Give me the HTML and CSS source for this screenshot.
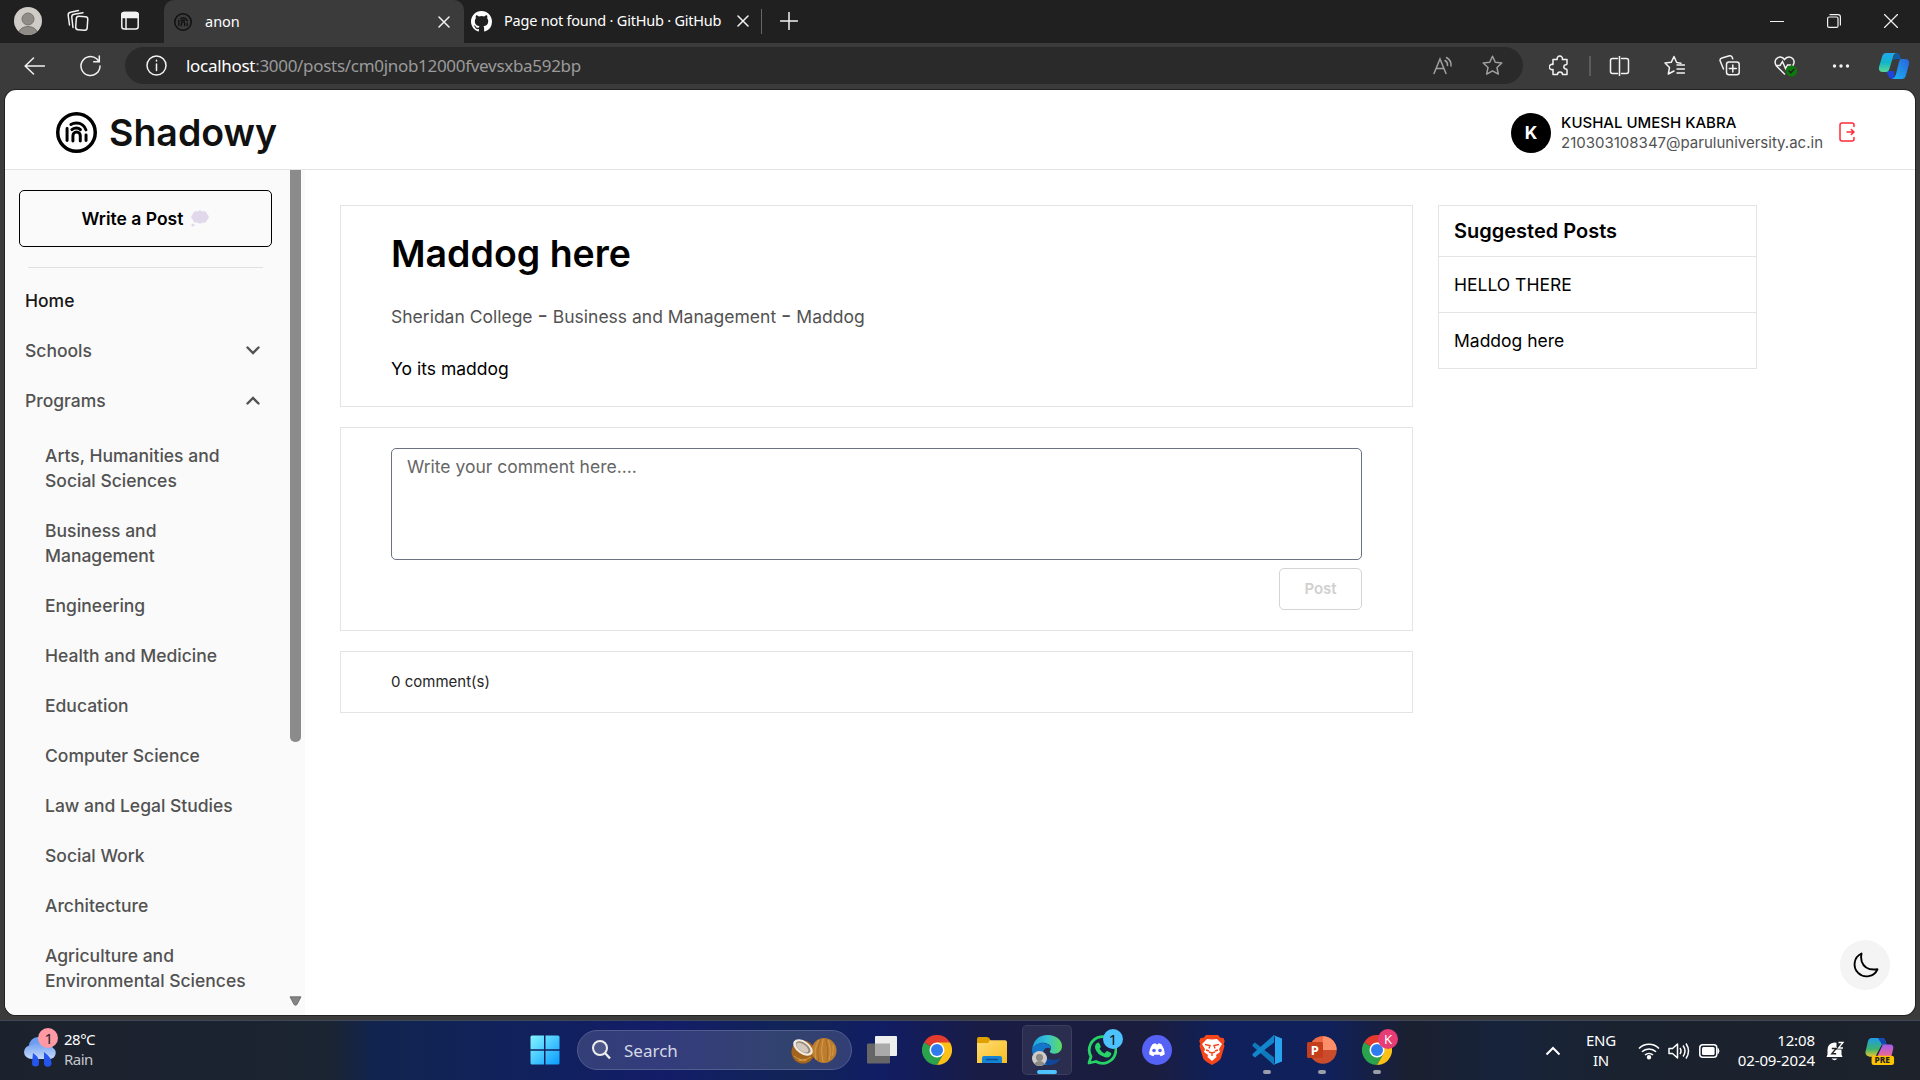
FILE: index.html
```html
<!DOCTYPE html>
<html lang="en">
<head>
<meta charset="utf-8">
<title>anon</title>
<link rel="stylesheet" href="styles.css">
</head>
<body>
<svg class="defs" width="0" height="0">
  <defs>
    <symbol id="finger" viewBox="0 0 40 40">
      <g fill="none" stroke="currentColor" stroke-linecap="round">
        <circle cx="20" cy="20" r="18.3" stroke-width="3.4"/>
        <g stroke-width="2.900">
          <path d="M14.500 12.200C16 11.300 18 10.800 20 10.800c4.300 0 8 2.800 9.200 6.700"/>
          <path d="M10.800 16v11.800M15.500 17.200q2-1.600 4.500-1.600 2.200 0 3.800 1.600"/>
          <path d="M16.500 28.200v-5a3.600 3.600 0 0 1 7.200 0v5M29.300 22.500v5.300"/>
        </g>
      </g>
    </symbol>
    <symbol id="chrome" viewBox="0 0 30 30">
      <path d="M15 15 2 7.500A15 15 0 0 1 28 7.500z" fill="#e33b2e"/>
      <path d="M15 15 2 7.500A15 15 0 0 0 15 30l6.500-11.200z" fill="#2ba24c"/>
      <path d="M15 7.500h13A15 15 0 0 1 15 30l6.500-11.200z" fill="#fbc116"/>
      <circle cx="15" cy="15" r="7.500" fill="#fff"/><circle cx="15" cy="15" r="6" fill="#2f7cee"/>
    </symbol>
    <symbol id="person" viewBox="0 0 28 28">
      <clipPath id="pc"><circle cx="14" cy="14" r="14"/></clipPath>
      <g clip-path="url(#pc)"><path d="M0 0h28v28H0z" fill="#cfccc8"/><circle cx="14" cy="12" r="6" fill="#8f8c88" stroke="#77746f"/><ellipse cx="14" cy="26.500" rx="9.500" ry="7" fill="#8f8c88" stroke="#77746f"/></g>
    </symbol>
    <linearGradient id="gw" x1="0" y1="0" x2="1" y2="1"><stop offset="0" stop-color="#84f5ff"/><stop offset="1" stop-color="#0a9bff"/></linearGradient>
    <linearGradient id="gcp" x1="0" y1="0" x2="0" y2="1"><stop offset="0" stop-color="#22a7f0"/><stop offset=".5" stop-color="#12b5c9"/><stop offset="1" stop-color="#58d895"/></linearGradient>
    <linearGradient id="gcp2" x1="1" y1="0" x2="0" y2="1"><stop offset="0" stop-color="#2a62dc"/><stop offset="1" stop-color="#19b5f2"/></linearGradient>
    <linearGradient id="gpre" x1="0" y1="0" x2="0" y2="1"><stop offset="0" stop-color="#1f9bea"/><stop offset=".6" stop-color="#3cb371"/><stop offset="1" stop-color="#e8c62c"/></linearGradient>
    <linearGradient id="gpre2" x1="0" y1="0" x2="0" y2="1"><stop offset="0" stop-color="#a35cf0"/><stop offset="1" stop-color="#f0688c"/></linearGradient>
    <linearGradient id="ge" x1="0" y1="0" x2="1" y2="0"><stop offset="0" stop-color="#1a9fe0"/><stop offset=".5" stop-color="#35c1d8"/><stop offset="1" stop-color="#5fdd5a"/></linearGradient>
    <linearGradient id="gf" x1="0" y1="0" x2="1" y2="1"><stop offset="0" stop-color="#ffdc70"/><stop offset="1" stop-color="#f8bd24"/></linearGradient>
    <linearGradient id="gc" x1="0" y1="0" x2="0" y2="1"><stop offset="0" stop-color="#6f9ff0"/><stop offset="1" stop-color="#c5d8fb"/></linearGradient>
  </defs>
</svg>

<header class="tabstrip">
  <svg class="profile" width="28" height="28"><use href="#person"/></svg>
  <svg class="workspaces line" width="22" height="24" viewBox="0 0 22 24"><rect x="9" y="7.500" width="11.500" height="13.500" rx="2.500" transform="rotate(4 15 14)"/><path d="M6 18.500 4.800 8.500C4.600 6.800 5.500 5.500 7 5.300l9-1.600M2.500 16 1.200 6.500C1 4.800 2 3.500 3.500 3.200l8-1.700"/></svg>
  <svg class="tabactions line" width="18" height="20" viewBox="0 0 18 20"><rect x=".8" y="1.500" width="16.400" height="16.500" rx="2.500"/><path d="M1 3.500Q1 1.500 3 1.500h12q2 0 2 2V6.500H1z" fill="#f2f2f2"/><path d="M5 7v11"/></svg>
  <div class="tab active">
    <svg class="favicon" width="18" height="18"><use href="#finger"/></svg>
    <span class="tab-title">anon</span>
    <svg class="close line" width="12" height="12" viewBox="0 0 12 12"><path d="m1 1 10 10M11 1 1 11"/></svg>
  </div>
  <div class="tab second">
    <svg width="21" height="21" viewBox="0 0 16 16"><path fill="#fff" d="M8 0C3.580 0 0 3.580 0 8c0 3.540 2.290 6.530 5.470 7.590.4.070.55-.17.55-.38 0-.19-.01-.82-.01-1.490-2.010.37-2.530-.49-2.690-.94-.09-.23-.48-.94-.82-1.130-.28-.15-.68-.52-.01-.53.63-.01 1.080.58 1.230.82.72 1.210 1.870.87 2.330.66.070-.52.280-.87.510-1.070-1.780-.2-3.640-.89-3.640-3.950 0-.87.310-1.590.82-2.150-.08-.2-.36-1.020.08-2.120 0 0 .67-.21 2.200.82a7.600 7.600 0 0 1 4 0c1.530-1.040 2.200-.82 2.200-.82.44 1.100.16 1.920.08 2.120.51.56.82 1.270.82 2.150 0 3.070-1.870 3.750-3.650 3.950.29.25.54.73.54 1.480 0 1.070-.01 1.930-.01 2.200 0 .21.15.46.55.38A8.010 8.010 0 0 0 16 8c0-4.420-3.580-8-8-8z"/></svg>
    <span class="tab-title">Page not found · GitHub · GitHub</span>
    <svg class="close line" width="12" height="12" viewBox="0 0 12 12"><path d="m1 1 10 10M11 1 1 11"/></svg>
  </div>
  <svg class="newtab line" width="18" height="18" viewBox="0 0 18 18"><path d="M9 .5v17M.5 9h17"/></svg>
  <div class="winctl">
    <svg class="line thin" width="14" height="14" viewBox="0 0 14 14"><path d="M.5 7.500h13"/></svg>
    <svg class="line thin" width="14" height="14" viewBox="0 0 14 14"><rect x=".6" y="3" width="10.400" height="10.400" rx="1.500"/><path d="M3 .7h8q2.400 0 2.400 2.400V11"/></svg>
    <svg class="line thin" width="14" height="14" viewBox="0 0 14 14"><path d="m.5.500 13 13M13.500.5l-13 13"/></svg>
  </div>
</header>

<nav class="toolbar">
  <svg class="back line" width="21" height="18" viewBox="0 0 21 18"><path d="M20.500 9H1.500M9.500 1 1.200 9l8.300 8"/></svg>
  <svg class="reload line" width="21" height="22" viewBox="0 0 21 22"><path d="M20 11a9.500 9.500 0 1 1-3.300-7.200L19 6.500M19.300 1v5.700h-5.600"/></svg>
  <div class="address">
    <svg class="line" width="21" height="21" viewBox="0 0 21 21"><circle cx="10.500" cy="10.500" r="9.500"/><path d="M10.500 9v6.500M10.500 5.300v.6"/></svg>
    <span class="url"><b>localhost</b>:3000/posts/cm0jnob12000fvevsxba592bp</span>
    <svg class="read line dim" width="20" height="20" viewBox="0 0 20 20"><path d="M1 17.500 7 3l6 14.500M3 12.500h8M12 4.500a5 5 0 0 1 2.500 5M13.500 1.500a9 9 0 0 1 4.500 8.500"/></svg>
    <svg class="line dim" width="21" height="21" viewBox="0 0 21 21"><path d="m10.500 1.200 2.800 6 6.500.8-4.800 4.500 1.300 6.600-5.800-3.300-5.800 3.300L6 12.500 1.200 8l6.500-.8z" stroke-linejoin="round"/></svg>
  </div>
  <div class="tools">
    <svg class="line" width="21" height="22" viewBox="0 0 21 22"><path d="M4 4.500h4.200a2.700 2.700 0 1 1 5.200 0H18v4.200a1 1 0 0 1-1 1 2 2 0 0 0 0 4.300 1 1 0 0 1 1 1v4.500h-4.500a2.500 2.500 0 0 0-5 0H4v-5a2.700 2.700 0 1 1 0-5z" stroke-linejoin="round"/></svg>
    <i class="sep"></i>
    <svg class="line" width="21" height="20" viewBox="0 0 21 20"><path d="M8.500 2.500H3.500q-2 0-2 2v11q0 2 2 2h5M12.500 2.500h5q2 0 2 2v11q0 2-2 2h-5M10.500 0v20"/></svg>
    <svg class="line" width="21" height="21" viewBox="0 0 21 21"><path d="M17 8.200 12.700 7.500 10 1.500 7.200 7.300 1 8l4.500 4.500L4.300 19l5.700-3M13 10h7.500M13 14h7.500M13 18h7.500" stroke-linejoin="round"/></svg>
    <svg class="line" width="21" height="21" viewBox="0 0 21 21"><rect x="7.500" y="7" width="12.700" height="12.800" rx="2.500"/><path d="M13.800 10v7M10.300 13.500h7M4.500 14 1 5.500Q.8 3.500 3 3l7.500-2.200q2-.3 2.700 1.500l.5 1.500"/></svg>
    <svg class="line heart" width="24" height="22" viewBox="0 0 24 22"><path d="M10.500 19 2.500 11Q0 7.500 2 4.200c2.500-3.500 6.500-2.700 8.500.3 2-3 6.500-3.800 8.700-.3 1.200 2 1 4.300-.2 6M2 10.500h4l2.500-4 3 7 2-3.500h3"/><circle cx="17.500" cy="16" r="5.500" fill="#0b7a0b" stroke="none"/><path d="m15 16 1.800 1.800 3.200-3.500" stroke="#222"/></svg>
    <svg width="18" height="6" viewBox="0 0 18 6"><g fill="#f2f2f2"><circle cx="2.500" cy="3" r="1.700"/><circle cx="9" cy="3" r="1.700"/><circle cx="15.500" cy="3" r="1.700"/></g></svg>
    <svg class="copilot" width="32" height="28" viewBox="0 0 32 28"><path d="M18 1q3 0 4 3l1 3h-5l-4 1z" fill="#115ba6"/><path d="M8 19h8l1 8q-5 0-6-2z" fill="#1f45d8"/><path d="M8 1h11q-3 0-4 4l-4 13q-1 2-3 2H5q-5 0-4-5L4 5q1-4 4-4z" fill="url(#gcp)"/><path d="M23 7h4q5 0 4 5l-3 11q-1 4-4 4H14q3-1 4-5l3-12q.6-3 2-3z" fill="url(#gcp2)"/></svg>
  </div>
</nav>

<div class="viewport">
  <header class="apphead">
    <div class="brand"><svg width="41" height="41"><use href="#finger"/></svg><span>Shadowy</span></div>
    <div class="user">
      <span class="avatar">K</span>
      <div class="who"><span class="name">KUSHAL UMESH KABRA</span><span class="mail">210303108347@paruluniversity.ac.in</span></div>
      <svg width="17" height="20" viewBox="0 0 17 20" fill="none" stroke="#ff2a36" stroke-width="1.500" stroke-linecap="round" stroke-linejoin="round"><path d="M15 4.500V3q0-2-2-2H3Q1 1 1 3v14q0 2 2 2h10q2 0 2-2v-1.500M8 10h7M12.300 7.500l2.700 2.500-2.700 2.500"/></svg>
    </div>
  </header>
  <div class="appbody">
    <aside class="sidebar">
      <div class="sidecol">
        <div class="write"><span>Write a Post</span><svg width="18" height="17" viewBox="0 0 18 17"><g fill="#e1d8eb"><ellipse cx="9" cy="7" rx="8.800" ry="5"/><circle cx="5" cy="4" r="2.800"/><circle cx="9" cy="3.300" r="2.800"/><circle cx="13" cy="4" r="2.800"/><circle cx="5" cy="10" r="2.800"/><circle cx="9" cy="10.800" r="2.800"/><circle cx="13" cy="10" r="2.800"/><circle cx="2" cy="15" r="1.600"/></g></svg></div>
        <hr class="rule">
        <div class="nav home">Home</div>
        <div class="nav">Schools<svg width="14" height="9" viewBox="0 0 14 9"><path d="m1.500 1.500 5.500 5.500 5.500-5.500"/></svg></div>
        <div class="nav">Programs<svg width="14" height="9" viewBox="0 0 14 9"><path d="M1.500 7.500 7 2l5.500 5.500"/></svg></div>
        <ul class="programs">
          <li>Arts, Humanities and Social Sciences</li><li>Business and Management</li><li>Engineering</li><li>Health and Medicine</li><li>Education</li><li>Computer Science</li><li>Law and Legal Studies</li><li>Social Work</li><li>Architecture</li><li>Agriculture and Environmental Sciences</li>
        </ul>
      </div>
      <div class="scroll"><div class="thumb"></div><svg width="13" height="10" viewBox="0 0 13 10"><path d="M1 .8h11L8 8.500Q6.500 10 5 8.500z" fill="#858585" stroke="#555" stroke-width=".7"/></svg></div>
    </aside>
    <main class="content">
      <div class="posts">
        <article class="card post"><h1>Maddog here</h1><p class="meta">Sheridan College <span class="dash">-</span> Business and Management <span class="dash">-</span> Maddog</p><p class="text">Yo its maddog</p></article>
        <section class="card reply"><div class="area">Write your comment here....</div><div class="postbtn">Post</div></section>
        <section class="card count">0 comment(s)</section>
      </div>
      <aside class="suggested"><h2>Suggested Posts</h2><div>HELLO THERE</div><div>Maddog here</div></aside>
    </main>
  </div>
  <div class="theme"><svg width="27" height="27" viewBox="0 0 27 27"><path d="M9.500 1.500A12 12 0 1 0 25.500 17.300Q13 19 9.700 9.500 8.500 5 9.500 1.500z" fill="none" stroke="#000" stroke-width="1.900" stroke-linejoin="round"/></svg></div>
</div>

<footer class="taskbar">
  <div class="weather">
    <svg width="36" height="46" viewBox="0 0 36 46"><circle cx="14" cy="20" r="9" fill="#6c9df0"/><path d="M8 19a8 7 0 0 0 0 14h18a6 6 0 0 0 3-11q-3-5-8-3-7-5-13 0z" fill="url(#gc)"/><path d="M9 27q7 5 6 10a3.500 3.500 0 0 1-7 0zM20 26q8 6 7.500 11a3.700 3.700 0 0 1-7.500 0z" fill="#2456ee"/><circle cx="24" cy="12" r="10" fill="#ff99a4"/><text x="20.500" y="17.500" font-size="15" fill="#222">1</text></svg>
    <div class="wtext"><span>28°C</span><span class="rain">Rain</span></div>
  </div>
  <div class="apps">
    <svg class="start" width="30" height="30" viewBox="0 0 30 30"><path d="M2 .5h12v13.700H.5V2Q.5.500 2 .5zM15.500.5H28q1.500 0 1.500 1.500v12.200h-14zM.5 15.700H14v13.800H2q-1.500 0-1.500-1.500zM15.500 15.700h14V28q0 1.500-1.500 1.500H15.500z" fill="url(#gw)"/></svg>
    <div class="search">
      <svg width="19" height="20" viewBox="0 0 19 20"><circle cx="8" cy="8" r="7" fill="#ffffff22" stroke="#eee" stroke-width="2"/><path d="m13 13 5 5.500" stroke="#eee" stroke-width="2.400"/></svg>
      <span>Search</span>
      <svg class="coco" width="48" height="28" viewBox="0 0 48 28"><circle cx="14" cy="16" r="11.500" fill="#a2641c"/><path d="M5 20q8 7 17 1M9 24q5 2 9 0" fill="none" stroke="#d29a48"/><ellipse cx="35" cy="14.500" rx="12.500" ry="12.500" fill="#bd7d2d"/><path d="M30 4q-6 9-3 19M34 3q-3 12 0 23M39 4q4 10 1 20M44 9q1 7-1 11" fill="none" stroke="#d59d4b"/><path d="M32 3q-5 10-2 22M37 3q3 10 1 22" fill="none" stroke="#a5692a"/><ellipse cx="14" cy="11.500" rx="11" ry="6.500" transform="rotate(35 14 11.500)" fill="#f3ebe2"/><ellipse cx="14" cy="11.300" rx="8.500" ry="4.500" transform="rotate(35 14 11.500)" fill="#9b8a79"/><ellipse cx="13.500" cy="12" rx="7" ry="3.400" transform="rotate(35 14 11.500)" fill="#d4c9bd"/></svg>
    </div>
    <svg width="30" height="30" viewBox="0 0 30 30"><rect y="8.500" width="23" height="20" rx="1" fill="#666"/><rect x="8" y="1" width="22" height="20" rx="1" fill="#eee"/><path d="M8 8.500h15V21H8z" fill="#aaa"/></svg>
    <svg width="30" height="30"><use href="#chrome"/></svg>
    <svg width="30" height="30" viewBox="0 0 30 30"><path d="M0 4q0-2 2-2h8q1.500 0 2.500 1.500L14 6v5H0z" fill="#e0a100"/><path d="M0 8h11l2-2.700h15q2 0 2 2V28H0z" fill="url(#gf)"/><path d="M5 28v-5q0-2 2-2h16q2 0 2 2v5z" fill="#1483d4"/><path d="M9 24.500h12" stroke="#0a4c91" stroke-width="1.500"/></svg>
    <div class="app running"><svg width="30" height="30" viewBox="0 0 30 30"><path d="M0 15Q2 0 16 0c8 0 14 5 14 11 0 7-7 9-11 7-3-1.500 1-3 0-6C17 7 5 5 0 15z" fill="url(#ge)"/><path d="M0 14q4-7 12-6c6 1 7 4 7 6q-5-3-7 1c-3 6 2 12 8 13-9 6-20-1-20-14z" fill="#1276ca"/><path d="M11 17q2 8 11 8 4 0 7-2-5 8-14 7-6-4-4-13z" fill="#10479a"/></svg><svg class="mini" width="15" height="15"><use href="#person"/></svg><i></i></div>
    <div class="app"><svg width="30" height="30" viewBox="0 0 30 30"><path d="M2 28 4 21.500A13.300 13.300 0 1 1 9 26.500z" fill="none" stroke="#25d366" stroke-width="2.800" stroke-linejoin="round"/><path d="M10 8q1.500-1 2.300.3l1.400 3q.3 1-1.200 2.500 2 3.500 5 4.600l1.800-2q.7-.7 1.500-.2l3 1.500q.8.500.3 2-1.500 3.500-6 2.500-8-2.200-10-9-.5-3.500 1.900-5.200z" fill="#25d366"/></svg><span class="badge">1</span></div>
    <svg width="30" height="30" viewBox="0 0 30 30"><circle cx="15" cy="15" r="15" fill="#5662f6"/><path d="M10.500 9.200q2-1 3-1l.5 1h2l.5-1q1 0 3 1 3.500 5 3.300 10-2 1.700-4.200 2l-1.200-1.800q-2.400.6-4.800 0L11.400 21.200q-2.200-.3-4.200-2 0-5.500 3.300-10z" fill="#fff"/><circle cx="12" cy="15.500" r="1.800" fill="#5662f6"/><circle cx="18" cy="15.500" r="1.800" fill="#5662f6"/></svg>
    <svg width="30" height="30" viewBox="0 0 30 30"><path d="M9 0h12l2.500 2.700 3 .3 1.200 3-1 3 .8 2-3.500 12Q23 26 15 30 7 26 6 23L2.500 11l.8-2-1-3L3.500 3l3-.3z" fill="#f5451b"/><path d="M15 4.500 20 4l5 5-3 5 1 3-4 3 .5 2L15 26l-4.500-4 .5-2-4-3 1-3-3-5 5-5z" fill="#fff"/><path d="M8 9.500l5 1-1 3M22 9.500l-5 1 1 3M12 17l3 1 3-1M15 18v3M9 15l3 1M21 15l-3 1" fill="none" stroke="#f5451b" stroke-width="1.400"/></svg>
    <div class="app"><svg width="30" height="30" viewBox="0 0 30 30"><path d="m1 9 2-1.500 19 15V30L1 11.500q-1-1.200 0-2.500z" fill="#0e79bd"/><path d="m1 21 2 1.500 19-15V0L1 18.500q-1 1.200 0 2.500z" fill="#1286cc"/><path d="m21 0 9 3.500v23L21 30q2-1 2-3V3q0-2-2-3z" fill="#27a3ef"/></svg><i></i></div>
    <div class="app"><svg width="30" height="30" viewBox="0 0 30 30"><circle cx="16" cy="15" r="13.700" fill="#ca4c2c"/><path d="M16 1.300A13.700 13.700 0 0 1 29.700 15H16z" fill="#ff8f6b"/><path d="M16 1.300A13.700 13.700 0 0 0 2.300 15H16z" fill="#ed6c47"/><rect y="7" width="16" height="16" rx="1.500" fill="#c43e1c"/><text x="3.800" y="20" font-size="13" font-weight="700" fill="#fff">P</text></svg><i></i></div>
    <div class="app"><svg width="30" height="30"><use href="#chrome"/></svg><span class="badge k">K</span><i></i></div>
  </div>
  <div class="tray">
    <svg width="16" height="10" viewBox="0 0 16 10"><path d="m1.500 8.500 6.500-6.500 6.500 6.500" fill="none" stroke="#fff" stroke-width="2"/></svg>
    <div class="lang"><span>ENG</span><span>IN</span></div>
    <svg class="wifi" width="22" height="18" viewBox="0 0 22 18" fill="none" stroke="#fff" stroke-width="1.600"><path d="M1 6.500a14 14 0 0 1 20 0M4 9.800a10 10 0 0 1 14 0M7 13a6 6 0 0 1 8 0"/><circle cx="11" cy="15.300" r="1.400" fill="#fff"/></svg>
    <svg class="vol" width="22" height="18" viewBox="0 0 22 18" fill="none" stroke="#fff" stroke-width="1.500"><path d="M1 6.500h3.500L9.500 2v14l-5-4.500H1z" stroke-linejoin="round"/><path d="M12 6q2 3 0 6M15 3.500q4 5.500 0 11M18 1.500q5 7.500 0 15"/></svg>
    <svg class="bat" width="21" height="14" viewBox="0 0 21 14"><rect x=".8" y=".8" width="17" height="12.400" rx="3" fill="none" stroke="#fff" stroke-width="1.500"/><rect x="3" y="3" width="12.600" height="8" rx="1.500" fill="#fff"/><path d="M19 4.500q2 2.500 0 5z" fill="#fff" stroke="#fff"/></svg>
    <div class="clock"><span>12:08</span><span>02-09-2024</span></div>
    <svg class="bell" width="18" height="20" viewBox="0 0 18 20"><path d="M1.500 9q0-7 7-7.500l2 .3V6h5v7.500l1 2.500H.5l1-2.500zM5.500 17.500h6q-3 3.500-6 0z" fill="#fff"/><path d="M5.800 7.500h4.400L5.800 12.800h4.400" fill="none" stroke="#222" stroke-width="1.400"/><path d="M12.500 1.500H17L12.500 7H17" fill="none" stroke="#1c222c" stroke-width="3"/><path d="M12.500 1.500H17L12.500 7H17" fill="none" stroke="#fff" stroke-width="1.300"/></svg>
    <svg class="pre" width="30" height="30" viewBox="0 0 32 30"><path d="M7 1h11q3 0 4 4l1 3h-5l-7 13H5q-6-1-4-7L3 5q1-4 4-4z" fill="url(#gpre)"/><path d="M14 1h4q3 0 4 4l1 3h-5z" fill="#1547b8"/><path d="M19 8h8q4 0 3 5l-2 8H13z" fill="url(#gpre2)"/><rect x="7" y="20" width="24" height="10" rx="2.500" fill="#ffc400"/><text x="10" y="28.300" font-size="9" font-weight="800" fill="#222">PRE</text></svg>
  </div>
</footer>
</body>
</html>
```
FILE: styles.css
```css
* { box-sizing: border-box; }
body { margin: 0; width: 1920px; height: 1080px; overflow: hidden; background: #3b3b3b; display: flex; flex-direction: column; font-family: "Noto Sans", sans-serif; color: #fff; }
svg { display: block; flex: none; }
.defs { position: absolute; }
.line { fill: none; stroke: #f2f2f2; stroke-width: 1.5; stroke-linecap: round; }
.thin { stroke-width: 1.2; }
.dim { stroke: #a0a0a0; }

.tabstrip { height: 43px; flex: none; background: #202020; display: flex; align-items: center; padding: 0 0 1px 14px; }
.workspaces { margin-left: 25px; }
.tabactions { margin-left: 32px; }
.tab { height: 43px; display: flex; align-items: center; font-size: 14.5px; }
.tab-title { white-space: nowrap; padding-bottom: 2px; }
.active { width: 300px; margin: 1px 0 0 25px; padding: 0 14px 0 10px; background: #3b3b3b; border-radius: 10px 10px 0 0; }
.active .tab-title { margin-left: 13px; flex: 1; }
.favicon { color: #111; }
.second { width: 298px; padding-left: 7px; }
.second .tab-title { width: 219px; margin-left: 12px; letter-spacing: -.22px; }
.second .close { margin-left: 14px; }
.second::after { content: ""; width: 1px; height: 25px; background: #666; margin-left: 12px; }
.newtab { margin-left: 18px; }
.winctl { margin-left: auto; padding-right: 22px; display: flex; gap: 43px; }

.toolbar { height: 47px; flex: none; display: flex; align-items: center; padding: 0 0 2px 24px; }
.reload { margin-left: 35px; }
.address { margin-left: 24px; width: 1398px; height: 37px; border-radius: 19px; background: #2a2a2a; display: flex; align-items: center; padding: 0 20px 0 21px; }
.url { flex: 1; margin-left: 19px; font-size: 17px; color: #9a9a9a; letter-spacing: -.3px; }
.url b { font-weight: 400; color: #fff; }
.read { margin-right: 29px; }
.tools { margin-left: 26px; display: flex; align-items: center; gap: 34px; }
.sep { width: 2px; height: 20px; background: #5c5c5c; margin: 0 -16px 0 -15px; }
.copilot { margin-left: -6px; }

.viewport { position: relative; margin: 0 5px; height: 925px; flex: none; background: #fff; border-radius: 11px; overflow: hidden; color: #000; font-family: Inter, sans-serif; display: flex; flex-direction: column; box-shadow: 0 0 0 1px #222; }
.apphead { height: 80px; flex: none; border-bottom: 1px solid #e4e4e4; display: flex; align-items: center; justify-content: space-between; padding: 6px 59px 0 51px; }
.brand { display: flex; align-items: center; gap: 12px; font-size: 37.5px; font-weight: 600; color: #111; }
.brand svg { color: #000; }
.user { display: flex; align-items: center; }
.user > svg { margin-top: -2px; }
.avatar { width: 40px; height: 40px; border-radius: 50%; background: #000; color: #fff; display: grid; place-items: center; font-weight: 700; font-size: 17.5px; }
.who { display: flex; flex-direction: column; margin: 0 16px 0 10px; line-height: 20px; font-size: 15px; }
.name { font-weight: 500; }
.mail { color: #525252; }

.appbody { flex: 1; min-height: 0; display: flex; }
.sidebar { width: 300px; flex: none; background: #fafafa; display: flex; }
.sidecol { width: 283px; padding: 20px 16px 0 14px; }
.write { height: 57px; border: 1.5px solid #000; border-radius: 5px; display: flex; align-items: center; justify-content: center; gap: 8px; font-size: 17.5px; font-weight: 600; }
.rule { border: 0; height: 1px; background: #e0e0e0; margin: 20px 9px 7px; }
.nav { height: 50px; display: flex; align-items: center; justify-content: space-between; padding: 0 12px 0 6px; font-size: 17.5px; font-weight: 550; color: #525252; }
.nav svg { fill: none; stroke: #525252; stroke-width: 2.4; stroke-linecap: round; }
.home { color: #171717; }
.programs { list-style: none; margin: 5px 0 0; padding: 0 16px 0 26px; }
.programs li { padding: 12.5px 0; font-size: 17.5px; line-height: 25px; color: #525252; font-weight: 450; }
.scroll { width: 15px; display: flex; flex-direction: column; align-items: center; justify-content: space-between; padding-bottom: 9px; }
.thumb { width: 11px; height: 572px; background: #8b8b8b; border-radius: 0 0 5px 5px; }

.content { flex: 1; display: flex; align-items: flex-start; gap: 25px; padding: 35px 0 0 35px; }
.posts { width: 1073px; display: flex; flex-direction: column; gap: 20px; }
.card { border: 1px solid #e4e4e4; padding: 0 50px; }
h1, h2, p { margin: 0; }
.post { height: 202px; padding-top: 25px; }
h1 { font-size: 37.5px; line-height: 45px; font-weight: 600; }
.meta { margin-top: 28px; line-height: 25px; font-size: 17.5px; color: #525252; }
.dash { font-size: 22.5px; line-height: 0; }
.text { margin-top: 27px; line-height: 25px; font-size: 17.5px; }
.reply { height: 204px; padding-top: 20px; display: flex; flex-direction: column; align-items: flex-end; gap: 8px; }
.area { width: 100%; height: 112px; border: 1.25px solid #6b7280; border-radius: 5px; padding: 5px 15px; line-height: 25px; font-size: 17.5px; color: #666; }
.postbtn { width: 83px; height: 42px; border: 1px solid #d4d4d4; border-radius: 5px; color: #d0d0d0; font-size: 15px; font-weight: 600; display: grid; place-items: center; padding-bottom: 1px; }
.count { height: 62px; display: flex; align-items: center; font-size: 15px; color: #262626; padding-bottom: 2px; }
.suggested { width: 319px; border: 1px solid #e4e4e4; font-size: 17.5px; }
.suggested h2 { height: 50px; padding: 0 15px; line-height: 51px; font-size: 20px; font-weight: 600; }
.suggested div { height: 56px; padding: 0 15px; border-top: 1px solid #e4e4e4; line-height: 55px; }
.theme { position: absolute; right: 25px; bottom: 25px; width: 50px; height: 50px; border-radius: 50%; background: #f4f4f4; display: grid; place-items: center; }

.taskbar { margin-top: 5px; height: 60px; flex: none; border-top: 1px solid #3e485a; display: flex; font-size: 15px; background: linear-gradient(90deg, #1c222d 0, #1b2432 330px, #11244f 375px, #10225a 500px, #131d68 660px, #112457 790px, #111d64 880px, #191c45 980px, #1b1d3d 1150px, #0f205c 1220px, #10205a 1330px, #1b2030 1410px, #16233a 1500px, #1a222f 1620px, #1d222b 1920px); }
.weather { width: 500px; display: flex; padding: 5px 0 0 24px; }
.wtext { display: flex; flex-direction: column; line-height: 20px; margin: 3px 0 0 4px; letter-spacing: -.5px; }
.rain { color: #c5c8cc; }
.apps { display: flex; align-items: center; gap: 25px; margin-left: 30px; padding-bottom: 1px; }
.start { margin-right: -8px; }
.search { width: 275px; height: 40px; margin-right: -10px; border: 1px solid #515c8f; border-radius: 20px; background: #ffffff24; display: flex; align-items: center; padding: 0 14px; font-size: 17px; color: #d6d8e4; }
.search span { flex: 1; margin-left: 13px; }
.app { width: 30px; height: 50px; display: grid; place-items: center; position: relative; }
.app i { position: absolute; bottom: 1px; left: 11px; width: 8px; height: 4px; border-radius: 2px; background: #9a9eab; }
.running { width: 50px; margin: 0 -10px; background: #ffffff14; border: 1px solid #ffffff14; border-radius: 5px; }
.running i { left: 14px; bottom: 0; width: 20px; background: #4cc2ff; }
.mini { position: absolute; left: 9px; top: 25px; }
.badge { position: absolute; left: 16px; top: 4px; width: 20px; height: 20px; border-radius: 50%; background: #4cc2ff; color: #111; display: grid; place-items: center; line-height: 20px; }
.k { background: #e83c74; color: #fff; font-size: 13px; }
.tray { width: 375px; margin-left: auto; display: flex; align-items: center; }
.tray > div { display: flex; flex-direction: column; line-height: 20px; padding-bottom: 1px; }
.lang { align-items: center; width: 36px; margin-left: 22px; letter-spacing: -.2px; }
.wifi { margin-left: 19px; }
.vol { margin-left: 8px; }
.bat { margin-left: 9px; }
.clock { align-items: flex-end; width: 90px; margin-left: 5px; letter-spacing: -.1px; }
.bell { margin-left: 11px; }
.pre { margin-left: 21px; }
```
